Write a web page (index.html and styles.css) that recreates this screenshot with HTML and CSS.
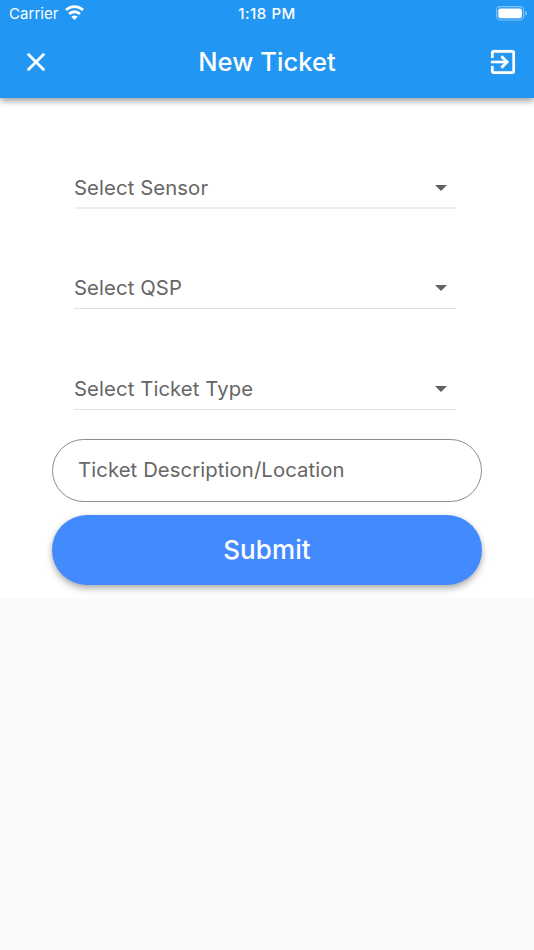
FILE: index.html
```html
<!DOCTYPE html>
<html lang="en">
<head>
<meta charset="utf-8">
<title>New Ticket</title>
<link rel="stylesheet" href="styles.css">
</head>
<body>
<header class="header">
  <div class="status">
    <div class="carrier"><span>Carrier</span>
      <svg class="wifi" width="19" height="15" viewBox="0 0 19 15" fill="none" stroke="#fff" stroke-width="2.8"><path d="M1 5.1a12.3 12.3 0 0 1 17 0M4.1 8.9a7.8 7.8 0 0 1 10.8 0"/><path d="M9.5 14.9 6.3 11.8a4.6 4.6 0 0 1 6.4 0Z" fill="#fff" stroke="none"/></svg>
    </div>
    <span class="time">1:18 PM</span>
    <svg class="battery" width="32" height="15" viewBox="0 0 32 15"><rect x=".6" y=".6" width="27" height="13.4" rx="3.6" fill="none" stroke="#fff" stroke-opacity=".45" stroke-width="1.1"/><rect x="2.3" y="2.4" width="23.6" height="9.8" rx="2" fill="#fff"/><path d="M29.3 5q1.7.6 1.7 2.3t-1.7 2.3Z" fill="#fff" fill-opacity=".5"/></svg>
  </div>
  <div class="toolbar">
    <svg class="close" width="34" height="34" viewBox="0 0 24 24" fill="#fff" stroke="#fff" stroke-width=".2"><path d="M18.4 6.91 17.09 5.6 12 10.69 6.91 5.6 5.6 6.91 10.69 12 5.6 17.09 6.91 18.4 12 13.31 17.09 18.4 18.4 17.09 13.31 12z"/></svg>
    <h1 class="title">New Ticket</h1>
    <svg class="exit" width="32" height="32" viewBox="0 0 24 24" fill="#fff" stroke="#fff" stroke-width=".1"><path d="M10.09 15.59 11.5 17l5-5-5-5-1.41 1.41L12.67 11H3v2h9.67l-2.58 2.59zM19 3H5a2 2 0 0 0-2 2v4h2V5h14v14H5v-4H3v4a2 2 0 0 0 2 2h14a2 2 0 0 0 2-2V5a2 2 0 0 0-2-2z"/></svg>
  </div>
</header>
<main class="form">
  <div class="select"><span class="label">Select Sensor</span><svg width="12" height="6" viewBox="0 0 12 6"><path d="M0 0h12L6 6z" fill="#616161"/></svg></div>
  <div class="select"><span class="label">Select QSP</span><svg width="12" height="6" viewBox="0 0 12 6"><path d="M0 0h12L6 6z" fill="#616161"/></svg></div>
  <div class="select"><span class="label">Select Ticket Type</span><svg width="12" height="6" viewBox="0 0 12 6"><path d="M0 0h12L6 6z" fill="#616161"/></svg></div>
  <div class="field"><span class="label">Ticket Description/Location</span></div>
  <button class="submit" type="button">Submit</button>
</main>
</body>
</html>
```
FILE: styles.css
```css
* { box-sizing: border-box; }
body {
  margin: 0;
  min-height: 950px;
  background: #fafafa;
  font-family: Inter, "Liberation Sans", sans-serif;
}
svg { display: block; flex: none; }
.header {
  position: relative;
  height: 98px;
  background: #2196f3;
  color: #fff;
  box-shadow: 0 4px 6px rgba(0, 0, 0, .26), 0 1px 5px rgba(0, 0, 0, .14);
}
.status {
  display: grid;
  grid-template-columns: 1fr auto 1fr;
  align-items: center;
  height: 28px;
  padding: 0 6px 0 9px;
  font-size: 15px;
  line-height: 28px;
}
.carrier { display: flex; align-items: center; gap: 6px; letter-spacing: .05px; }
.wifi { margin-top: -3px; }
.time { margin-left: -3px; font-weight: 550; letter-spacing: .55px; }
.battery { justify-self: end; margin-top: -1px; }
.toolbar {
  display: grid;
  grid-template-columns: 1fr auto 1fr;
  align-items: center;
  height: 68px;
  padding: 0 15px 0 19px;
}
.title { margin: 0 4px 0 0; font-size: 25.5px; font-weight: 500; letter-spacing: .05px; line-height: 34px; }
.exit { justify-self: end; }
.form {
  display: flex;
  flex-direction: column;
  height: 500px;
  padding: 69px 52px 0;
  background: #fff;
}
.select {
  display: flex;
  align-items: center;
  justify-content: space-between;
  height: 42px;
  margin: 0 26px 58px 22px;
  padding: 1px 9px 0 0;
  border-bottom: 1px solid #e0e0e0;
}
.select:nth-child(1) { padding-top: 2px; border-bottom: 2px solid #eee; }
.select:nth-child(2) { margin-bottom: 59px; }
.select:nth-child(3) { margin-bottom: 29px; }
.label { color: #666; font-size: 20.3px; line-height: 30px; letter-spacing: .1px; white-space: nowrap; }
.field {
  display: flex;
  align-items: center;
  height: 63px;
  padding: 0 25px 1px;
  border: 1px solid #8c8c8c;
  border-radius: 32px;
}
.submit {
  height: 69.5px;
  margin-top: 13px;
  padding: 0;
  border: 0;
  border-radius: 35px;
  background: #448aff;
  color: #fff;
  font: 550 26px/67px Inter, "Liberation Sans", sans-serif;
  letter-spacing: .1px;
  box-shadow: 0 4px 7px rgba(0, 0, 0, .26), 0 1px 5px rgba(0, 0, 0, .12);
}
```
